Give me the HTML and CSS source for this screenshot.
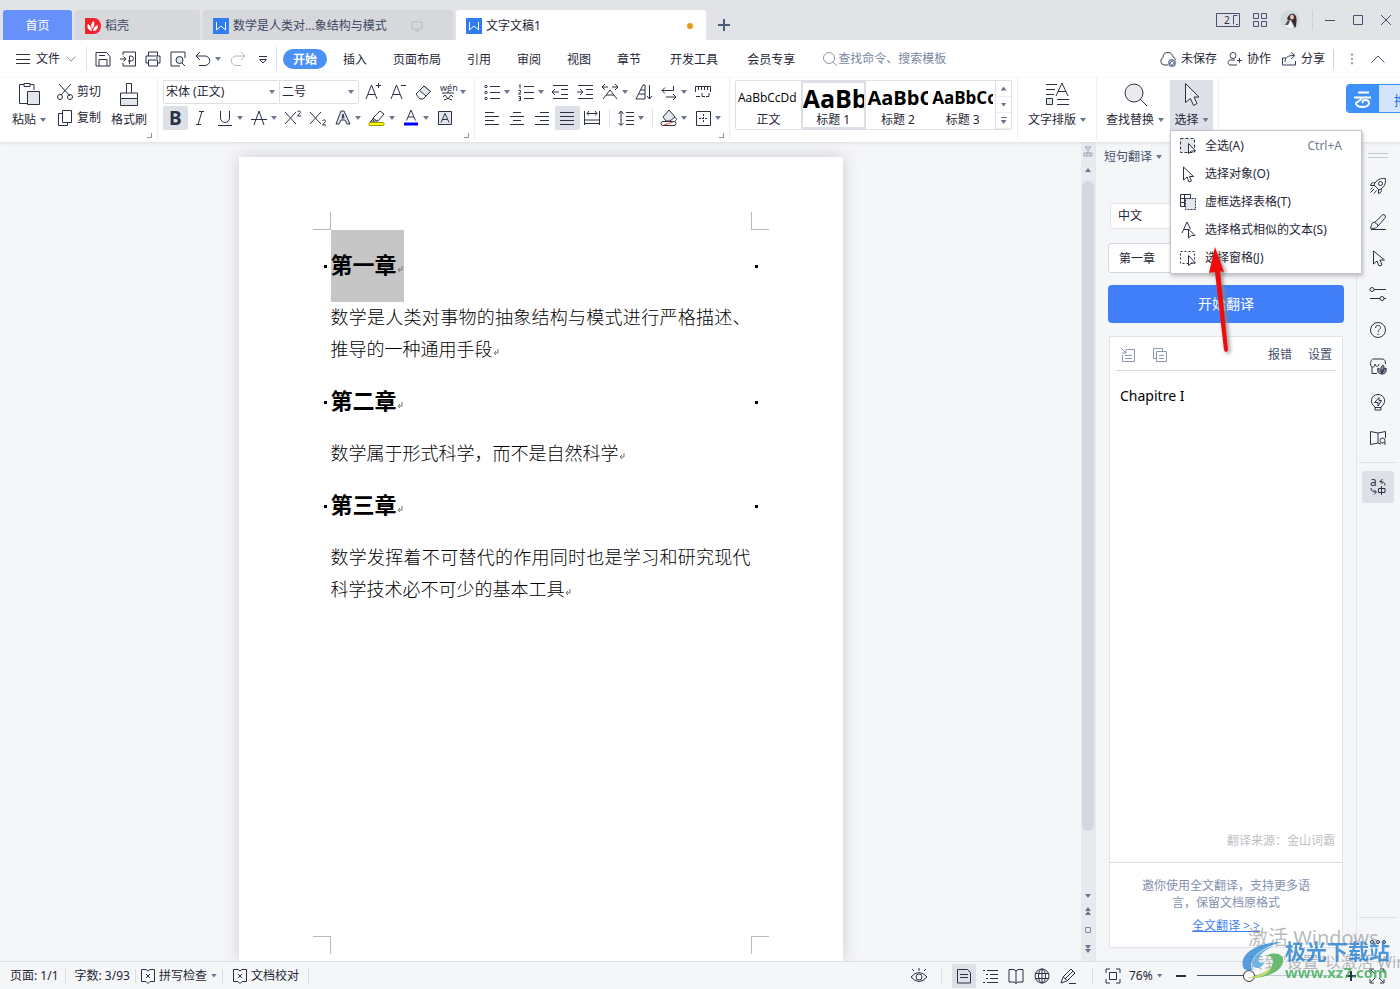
FILE: index.html
```html
<!DOCTYPE html>
<html lang="zh-CN">
<head>
<meta charset="utf-8">
<title>文字文稿1</title>
<link rel="stylesheet" href="styles.css">
</head>
<body>
<header class="titlebar">
  <nav class="tabs">
    <button class="tab tab-home">首页</button>
    <button class="tab tab-docer"><svg class="logo" viewBox="0 0 16 16"><path d="M0 0h9a7 8 0 0 1 0 16H0z" fill="#f5222d"/><path d="M7 13C2 12 2 8 3 6c2 1 3 3 4 7zM7 11C5 7 7 4 9 3c1 3 0 6-2 8zM8 13c0-3 2-5 5-6 0 4-2 6-5 6z" fill="#fff"/></svg>稻壳</button>
    <button class="tab tab-doc"><svg class="logo" viewBox="0 0 16 16"><rect width="16" height="16" fill="#2f7df0"/><path d="M3.500 4v8L8 8l4.500 4V4" fill="none" stroke="#fff"/></svg>数学是人类对...象结构与模式<svg class="screen" viewBox="0 0 12 12"><path d="M1 2h10v7H1zM6 9v2M4 11h4" fill="none" stroke="#b6bccd"/></svg></button>
    <button class="tab tab-active"><svg class="logo" viewBox="0 0 16 16"><rect width="16" height="16" fill="#2f7df0"/><path d="M3.500 4v8L8 8l4.500 4V4" fill="none" stroke="#fff"/></svg>文字文稿1<i class="unsaved"></i></button>
    <button class="newtab" aria-label="新建"><svg viewBox="-6 -6 12 12"><path d="M-6 0H6M0-6V6" stroke="#4d5b7a" stroke-width="2"/></svg></button>
  </nav>
  <div class="window-tools">
    <svg class="w24" viewBox="0 0 24 14"><path d="M.5.500h23v13H.5zM21.500 2.500h-4v9M20 11.500h2" fill="none" stroke="#44516f"/><text x="8" y="11" class="num">2</text></svg>
    <svg class="w16" viewBox="0 0 16 16"><path d="M1.500 1.500h5v5h-5zM9.500 1.500h5v5h-5zM1.500 9.500h5v5h-5zM9.500 9.500h5v5h-5z" fill="none" stroke="#44516f"/></svg>
    <svg class="w20" viewBox="0 0 20 20"><circle cx="10" cy="10" r="10" fill="#cfdadf"/><path d="M7 9c1-4 4-6 7-5 3 2 3 6 2 12l-1 2-3-6z" fill="#3b2c31"/><path d="M5 16c1-3 3-5 6-6l2 8c-3 1-6 0-8-2z" fill="#f2f3f5"/><path d="M5 15l3-5 2 1-2 4z" fill="#5a4a52"/><ellipse cx="12" cy="7" rx="2" ry="2.500" fill="#e9c2ad"/></svg>
    <i class="vline"></i>
    <svg class="w12" viewBox="0 0 12 12"><path d="M1 6.500h10" stroke="#44516f"/></svg>
    <svg class="w12" viewBox="0 0 12 12"><path d="M1.500 1.500h9v9h-9z" fill="none" stroke="#44516f"/></svg>
    <svg class="w12" viewBox="0 0 12 12"><path d="M1 1l10 10M11 1L1 11" stroke="#44516f"/></svg>
  </div>
</header>

<div class="menubar">
  <button class="file"><svg class="w14" viewBox="0 0 14 12"><path d="M0 1.500h14M0 6.500h14M0 10.500h14" stroke="#333"/></svg>文件<svg class="chev" viewBox="0 0 10 6"><path d="M.5.500L5 5 9.500.5" fill="none" stroke="#888f9f"/></svg></button>
  <div class="quick">
    <button aria-label="保存"><svg class="ic" viewBox="-12 -12 24 24"><path d="M-7-6.500H3.500l3.500 4V7H-7zM-4 7V.5H4V7M-4-3.500H2"/></svg></button>
    <button aria-label="输出为PDF"><svg class="ic" viewBox="-12 -12 24 24"><path d="M-5-4v-3H7.500V7H-5V4M-8 0h6M-4.500-2.500L-2 0l-2.500 2.500M1.500 5v-8h1.500a2.300 2.300 0 0 1 0 5H0"/></svg></button>
    <button aria-label="打印"><svg class="ic" viewBox="-12 -12 24 24"><path d="M-4.500-3v-4h9v4M-4.500 4H-7v-7H7v7H4.500M-4.500 1h9v6h-9zM3-1h2"/></svg></button>
    <button aria-label="打印预览"><svg class="ic" viewBox="-12 -12 24 24"><path d="M7-1v-6H-7V7H2"/><circle cx="1.500" cy="1" r="3.500" fill="#e3e6ea"/><path d="M4 4l3 3"/></svg></button>
    <button class="dd" aria-label="撤销"><svg class="ic" viewBox="-12 -12 24 24"><path d="M-3-7l-4 4 4 4M-7-3H2a4.500 4.500 0 0 1 0 9.500h-6"/></svg><i class="caret"></i></button>
    <button class="pale" aria-label="恢复"><svg class="ic" viewBox="-12 -12 24 24"><path d="M3-7l4 4-4 4M7-3H-2a4.500 4.500 0 0 0 0 9.500H3"/></svg></button>
    <button aria-label="自定义"><svg class="ic" viewBox="-12 -12 24 24"><path d="M-4-2.500h8M-3.500.500L0 4 3.500.5z"/></svg></button>
  </div>
  <nav class="menu-tabs">
    <button class="on">开始</button><button>插入</button><button>页面布局</button><button>引用</button><button>审阅</button><button>视图</button><button>章节</button><button>开发工具</button><button>会员专享</button>
  </nav>
  <label class="search"><svg class="w16" viewBox="0 0 16 16"><circle cx="7" cy="7" r="5.500" fill="none" stroke="#8c96ad"/><path d="M11 11l4 4" stroke="#8c96ad"/></svg><input type="text" placeholder="查找命令、搜索模板" aria-label="查找命令"></label>
  <div class="account">
    <button><svg class="w18" viewBox="0 0 18 16"><path d="M9 14H5a4 4 0 0 1-1-7.500C4 3 6 1.500 9 1.500S14 4 14 6c2 1 2.500 2 2.500 3" fill="none" stroke="#333d55"/><circle cx="13" cy="12" r="4" fill="#7e8aa5"/><path d="M11.500 10.500l3 3M14.500 10.500l-3 3" stroke="#fff"/></svg>未保存</button>
    <button><svg class="w16" viewBox="0 0 16 16"><circle cx="6" cy="4.500" r="3" fill="none" stroke="#333d55"/><path d="M8 9H4c-2 0-3 1-3 2.500S2 14 3 14h7M10 9.500h5M12.500 7v5" fill="none" stroke="#333d55"/></svg>协作</button>
    <button><svg class="w16" viewBox="0 0 16 16"><path d="M5 7H1.500v7h13v-4M4 11c0-5 3-6.500 9-6.500M10 1.500l4 3-4 3.500" fill="none" stroke="#333d55"/></svg>分享</button>
    <i class="vline"></i>
    <button aria-label="更多"><svg class="w12" viewBox="0 0 12 14"><path d="M5 1h2v2H5zM5 6h2v2H5zM5 11h2v2H5z" fill="#6c7689"/></svg></button>
    <button class="fold" aria-label="收起"><svg class="w14" viewBox="0 0 14 8"><path d="M.5 7.500L7 1l6.500 6.500" fill="none" stroke="#44516f"/></svg></button>
  </div>
</div>

<section class="ribbon">
  <div class="group g-clip">
    <button class="big paste"><svg class="bigic" viewBox="0 0 28 28"><path d="M9 4.500H4.500v19H12M19 10V4.500h-4M9 3.500h6v3H9z"/><path d="M12.500 11.500h12v13h-12z" fill="#e3e6ea"/></svg><span>粘贴<i class="caret"></i></span></button>
    <div class="stack">
      <button><svg class="w18" viewBox="0 0 18 18"><path d="M3 1l11 12M15 1L5 12"/><circle cx="4" cy="14" r="2.500"/><circle cx="14" cy="14" r="2.500"/></svg>剪切</button>
      <button><svg class="w18" viewBox="0 0 18 18"><path d="M6.500 1.500h9v12h-9zM6 4.500H2.500v12h9V14"/></svg>复制</button>
    </div>
    <button class="big brush"><svg class="bigic" viewBox="0 0 28 28"><path d="M11.500 13V3.500h5V13M5.500 18v-5h17v5"/><path d="M5.500 18.500h17v7h-17z" fill="#e3e6ea"/></svg><span>格式刷</span></button>
    <i class="launcher"></i>
  </div>

  <div class="group g-font">
    <div class="rows">
      <div class="row">
        <span class="combo family"><select aria-label="字体"><option>宋体 (正文)</option></select><i class="caret"></i></span>
        <span class="combo size"><select aria-label="字号"><option>二号</option></select><i class="caret"></i></span>
        <button aria-label="增大字号"><svg class="ic" viewBox="-12 -12 24 24"><path d="M-7 7L-1.500-7 4 7M-5 2.500H2M3-6.500h5M5.500-9v5"/></svg></button>
        <button aria-label="减小字号"><svg class="ic" viewBox="-12 -12 24 24"><path d="M-7 7L-1.500-7 4 7M-5 2.500H2M3-6.500h5"/></svg></button>
        <button aria-label="清除格式"><svg class="ic" viewBox="-12 -12 24 24"><path d="M-7 2L1-6l6.500 5.500L0 7h-3z"/><path d="M-3.500-1.500L3 4l4.500-4.500L1-6z" fill="#e3e6ea"/></svg></button>
        <button class="dd" aria-label="拼音指南"><svg class="ic" viewBox="-12 -12 24 24"><text x="-8" y="-1" class="pinyin">wén</text><path d="M-6 1H6M0-1v2M-3 3l-2 2M3 3l2 2M-4 8C0 7 2 5 3 3M4 8C0 7-2 5-3 3"/></svg><i class="caret"></i></button>
      </div>
      <div class="row">
        <button class="sel" aria-label="加粗"><svg class="ic" viewBox="-12 -12 24 24"><text x="-6" y="7" class="bold">B</text></svg></button>
        <button aria-label="倾斜"><svg class="ic" viewBox="-12 -12 24 24"><path d="M-1-6.500h5M-4 6.500h5M2-6.500l-4 13"/></svg></button>
        <button class="dd" aria-label="下划线"><svg class="ic" viewBox="-12 -12 24 24"><path d="M-4.500-7v7a4.500 4.500 0 0 0 9 0v-7M-7 7.500H7"/></svg><i class="caret"></i></button>
        <button class="dd" aria-label="删除线"><svg class="ic" viewBox="-12 -12 24 24"><path d="M-5 7L0-7 5 7M-8 1.500H8"/></svg><i class="caret"></i></button>
        <button aria-label="上标"><svg class="ic" viewBox="-12 -12 24 24"><path d="M-8-6L3 6M3-6L-8 6M4.500-6c1-2 3.500-1 3 .500L4.500-2H8"/></svg></button>
        <button aria-label="下标"><svg class="ic" viewBox="-12 -12 24 24"><path d="M-8-6L3 6M3-6L-8 6M4.500 3c1-2 3.500-1 3 .500L4.500 7H8"/></svg></button>
        <button class="dd" aria-label="文字效果"><svg class="ic" viewBox="-12 -12 24 24"><path d="M-7 6L-2-7H1L7 6H4L2 2h-4l-2 4zM-1 0h2l-1-4z" fill="#e3e6ea"/></svg><i class="caret"></i></button>
        <button class="dd" aria-label="突出显示"><svg class="ic" viewBox="-12 -12 24 24"><path d="M-4 0L3-7l4 3-6 7h-5zM-4 0l4 3M-4 1l-3 3h4"/><rect x="-8" y="4.500" width="15" height="3" rx="1" fill="#ff0" stroke="#999900"/></svg><i class="caret"></i></button>
        <button class="dd" aria-label="字体颜色"><svg class="ic" viewBox="-12 -12 24 24"><path d="M-4.500 2.500L0-8 4.500 2.500M-3-1H3"/><path d="M-7 6H7" stroke="#00f" stroke-width="3"/></svg><i class="caret"></i></button>
        <button aria-label="字符底纹"><svg class="ic" viewBox="-12 -12 24 24"><path d="M-6.500-6.500h13v13h-13z" fill="#e3e6ea"/><path d="M-4 4.500L0-4.500 4 4.500M-2.500 1.500h5"/></svg></button>
      </div>
    </div>
    <i class="launcher"></i>
  </div>

  <div class="group g-para">
    <div class="rows">
      <div class="row">
        <button class="dd" aria-label="项目符号"><svg class="ic" viewBox="-12 -12 24 24"><path d="M-2-5.500H8M-2 .5H8M-2 6.500H8"/><circle cx="-6" cy="-5.500" r="1.200"/><circle cx="-6" cy=".5" r="1.200"/><circle cx="-6" cy="6.500" r="1.200"/></svg><i class="caret"></i></button>
        <button class="dd" aria-label="编号"><svg class="ic" viewBox="-12 -12 24 24"><path d="M-2-5.500H8M-2 .5H8M-2 6.500H8M-7-6.500l1-1v4M-7.500-1.500h2v1.500l-2 2h2.500M-7.500 4.500h2v4h-2M-7 6.500h1.500"/></svg><i class="caret"></i></button>
        <button aria-label="减少缩进"><svg class="ic" viewBox="-12 -12 24 24"><path d="M-7-6.500H8M1-2.500H8M1 2.500H8M-7 6.500H8M-8 0h7M-5-3l-3 3 3 3"/></svg></button>
        <button aria-label="增加缩进"><svg class="ic" viewBox="-12 -12 24 24"><path d="M-7-6.500H8M1-2.500H8M1 2.500H8M-7 6.500H8M-8 0h6M-5-3l3 3-3 3"/></svg></button>
        <button class="dd" aria-label="中文版式"><svg class="ic" viewBox="-12 -12 24 24"><path d="M-8-5h6M-5-8l-3 3 3 3M8-5H2M5-8l3 3-3 3M-7 7L0-2 7 7M-4 3h8"/></svg><i class="caret"></i></button>
        <button aria-label="排序"><svg class="ic" viewBox="-12 -12 24 24"><path d="M-8 7L-1-7H1V7zM-5 2h6M-3-2h4M5.500-7V7M3 4l2.500 3L8 4"/></svg></button>
        <button class="dd" aria-label="换行"><svg class="ic" viewBox="-12 -12 24 24"><path d="M4.500-6v4.500H-7M-4-4.500l-3 3 3 3M-3 5H7M4 2l3 3-3 3"/></svg><i class="caret"></i></button>
        <button aria-label="制表位"><svg class="ic" viewBox="-12 -12 24 24"><path d="M-7.500 0v-5.500h15V0M-4.500-5v3M-1.500-5v3M1.500-5v3M4.500-5v3M-7 4.500h4M-1 1v3.500h3M6 1v3.500H3"/></svg></button>
      </div>
      <div class="row">
        <button aria-label="左对齐"><svg class="ic" viewBox="-12 -12 24 24"><path d="M-7-5.500h9M-7-1.500H7M-7 2.500h9M-7 6.500H7"/></svg></button>
        <button aria-label="居中"><svg class="ic" viewBox="-12 -12 24 24"><path d="M-4-5.500h8M-7-1.500H7M-4 2.500h8M-7 6.500H7"/></svg></button>
        <button aria-label="右对齐"><svg class="ic" viewBox="-12 -12 24 24"><path d="M-2-5.500h9M-7-1.500H7M-2 2.500h9M-7 6.500H7"/></svg></button>
        <button class="sel" aria-label="两端对齐"><svg class="ic" viewBox="-12 -12 24 24"><path d="M-7-5.500H7M-7-1.500H7M-7 2.500H7M-7 6.500H7"/></svg></button>
        <button aria-label="分散对齐"><svg class="ic" viewBox="-12 -12 24 24"><path d="M-7.500-7V7M7.500-7V7M-5-4.500H5M-3-7l-2 2.500 2 2M3-7l2 2.500-2 2M-7 2H7M-7 5.500H7"/></svg></button>
        <i class="mini"></i>
        <button class="dd" aria-label="行距"><svg class="ic" viewBox="-12 -12 24 24"><path d="M-5-6V7M-7.500-4L-5-7l2.500 3M-7.500 5L-5 7.500-2.500 5M0-5.500h8M0-1.500h8M0 2.500h8M0 6.500h8"/></svg><i class="caret"></i></button>
        <i class="mini"></i>
        <button class="dd" aria-label="底纹颜色"><svg class="ic" viewBox="-12 -12 24 24"><path d="M-6-1L0-8l6 7-5 4h-4z" fill="#e3e6ea"/><path d="M6-1c2 2 2 3 0 4"/><rect x="-8" y="3.500" width="15" height="4" rx="2" fill="#fff"/><path d="M-5 7L4 4" stroke="#e34a4a"/></svg><i class="caret"></i></button>
        <button class="dd" aria-label="边框"><svg class="ic" viewBox="-12 -12 24 24"><path d="M-6.500-6.500h14v14h-14z"/><path d="M-4 .5h9M.5-4v9" stroke-dasharray="2 1"/></svg><i class="caret"></i></button>
      </div>
    </div>
    <i class="launcher"></i>
  </div>

  <div class="group g-style">
    <div class="gallery">
      <button class="style"><b class="s0">AaBbCcDd</b>正文</button>
      <button class="style picked"><b class="s1">AaBb</b>标题 1</button>
      <button class="style"><b class="s2">AaBbC</b>标题 2</button>
      <button class="style"><b class="s3">AaBbCc</b>标题 3</button>
      <div class="spin"><button aria-label="上"><i class="caret up"></i></button><button aria-label="下"><i class="caret"></i></button><button class="expand" aria-label="展开"><i class="caret"></i></button></div>
    </div>
  </div>
  <div class="group g-type">
    <button class="big"><svg class="bigic" viewBox="0 0 28 28"><path d="M3 4.500h11M3 9.500h9M3 14.500h8M13 16l6-13 6 13M15 11.500h8M14 19.500h12M14 24.500h12"/><path d="M3.500 18.500h6v6h-6z" fill="#e3e6ea"/></svg><span>文字排版<i class="caret"></i></span></button>
  </div>
  <div class="group g-find">
    <button class="big find"><svg class="bigic" viewBox="0 0 28 28"><circle cx="13" cy="13" r="9" fill="#e9ebee"/><path d="M19 19l7 7"/></svg><span>查找替换<i class="caret"></i></span></button>
    <div class="pick">
      <button class="big open"><svg class="bigic" viewBox="0 0 28 28"><path d="M7.500 3.500v19l5-4 3 7 3.500-2-3-6.500H21z" fill="#eceef1"/></svg><span>选择<i class="caret"></i></span></button>
      <ul class="menu">
        <li><button><svg class="w18" viewBox="0 0 18 18"><path d="M1.500 1.500h14v14h-14z" stroke-dasharray="3 2" fill="#e3e6ea"/><path d="M9.500 6.500v10l3-2.500h4z" fill="#fff"/></svg>全选(A)<kbd>Ctrl+A</kbd></button></li>
        <li><button><svg class="w18" viewBox="0 0 18 18"><path d="M4.500 2v13l3.500-3 2 5 2.500-1-2-4.500h4z"/></svg>选择对象(O)</button></li>
        <li><button><svg class="w18" viewBox="0 0 18 18"><path d="M1.500 1.500h10v12h-10zM5.500 1.500v12M1.500 5.500h10M1.500 9.500h5"/><path d="M6.500 5.500h10v11h-10z" stroke-dasharray="2 1" fill="#e3e6ea"/></svg>虚框选择表格(T)</button></li>
        <li><button><svg class="w18" viewBox="0 0 18 18"><path d="M3 12L8 1l3.500 7M5 8.500h5M9.500 8v9l3-2.500H16z"/></svg>选择格式相似的文本(S)</button></li>
        <li><button><svg class="w18" viewBox="0 0 18 18"><path d="M1.500 2.500h14v12h-14z" stroke-dasharray="2 2"/><path d="M9.500 6.500v10l3-2.500h4z" fill="#fff"/></svg>选择窗格(J)</button></li>
      </ul>
      <svg class="pointer" viewBox="0 0 32 116"><path d="M8 3l9 25-4-1 8 79q-2 4-4 0L8 28l-6 1z" fill="#f00b0b"/></svg>
    </div>
  </div>
  <div class="cloud"><span class="cloud-logo"><svg class="w20" viewBox="0 0 20 20"><path d="M5 3.500h11M1 8.500h17M9 9c-2 3-5 4-6 5 0 3 3 4 7 4s6-2 6-4-2-3-4-3-3 2-2 3" fill="none" stroke="#fff" stroke-width="2"/></svg></span><span class="cloud-text">拖</span></div>
</section>

<main class="work">
  <section class="canvas">
    <article class="page">
      <div class="corners top"><i class="c tl"></i><i class="c tr"></i></div>
      <div class="text">
        <h1><span class="hl">第一章<svg class="ret" viewBox="0 0 6 8"><path d="M5 1v4H1M3 3L1 5l2 2" fill="none" stroke="#777"/></svg></span></h1>
        <p>数学是人类对事物的抽象结构与模式进行严格描述、推导的一种通用手段<svg class="ret" viewBox="0 0 6 8"><path d="M5 1v4H1M3 3L1 5l2 2" fill="none" stroke="#777"/></svg></p>
        <h1><span>第二章<svg class="ret" viewBox="0 0 6 8"><path d="M5 1v4H1M3 3L1 5l2 2" fill="none" stroke="#777"/></svg></span></h1>
        <p>数学属于形式科学，而不是自然科学<svg class="ret" viewBox="0 0 6 8"><path d="M5 1v4H1M3 3L1 5l2 2" fill="none" stroke="#777"/></svg></p>
        <h1><span>第三章<svg class="ret" viewBox="0 0 6 8"><path d="M5 1v4H1M3 3L1 5l2 2" fill="none" stroke="#777"/></svg></span></h1>
        <p>数学发挥着不可替代的作用同时也是学习和研究现代科学技术必不可少的基本工具<svg class="ret" viewBox="0 0 6 8"><path d="M5 1v4H1M3 3L1 5l2 2" fill="none" stroke="#777"/></svg></p>
      </div>
      <div class="corners bottom"><i class="c bl"></i><i class="c br"></i></div>
    </article>
  </section>
  <div class="scroll">
    <svg class="w12" viewBox="0 0 12 12"><path d="M3 1h6L6 4zM6 4v3M2 7h8v3H2zM5 7v3M8 7v3" fill="none" stroke="#9aa3b8"/></svg>
    <i class="caret up"></i>
    <div class="thumb"></div>
    <i class="caret"></i>
    <span class="double"><i class="caret up"></i><i class="caret up"></i></span>
    <i class="dot"></i>
    <span class="double"><i class="caret"></i><i class="caret"></i></span>
  </div>

  <aside class="panel">
    <button class="panel-title">短句翻译<i class="caret"></i></button>
    <select class="lang" aria-label="语言"><option>中文</option></select>
    <input class="source" type="text" value="第一章" aria-label="原文">
    <button class="go">开始翻译</button>
    <div class="card">
      <div class="card-bar">
        <svg class="w16" viewBox="0 0 16 16"><path d="M7 2.500h7.500v12h-12V8M1 1l5 5M6 2v4H2M5 8.500h7M5 11.500h7" fill="none" stroke="#8c96ad"/></svg>
        <svg class="w16" viewBox="0 0 16 16"><path d="M4 11.500H1.500v-10h9V4M4.500 4.500h10v10h-10zM7 8.500h5M7 11.500h5" fill="none" stroke="#8c96ad"/></svg>
        <button class="report">报错</button><button>设置</button>
      </div>
      <p class="result">Chapitre I</p>
      <p class="credit">翻译来源：金山词霸</p>
      <div class="promo"><p>邀你使用全文翻译，支持更多语言，保留文档原格式</p><a href="#">全文翻译 &gt; &gt;</a></div>
    </div>
  </aside>

  <nav class="rail">
    <i class="grip"></i>
    <button aria-label="快捷"><svg class="ic" viewBox="-12 -12 24 24"><path d="M7.500-7.500C2-8-2-6-4-1l5 5C6 2 8-2 7.500-7.500zM-3-3c-2-1-4 0-4.500 2.500H-4M3 3c1 2 0 4-2.500 4.500V4M-4 3l-3.500 3.500M-1.500 4.500L-4 7.500M-5.500 1.500l-2 2"/><circle cx="2.500" cy="-2.500" r="2"/></svg></button>
    <button aria-label="样式"><svg class="ic" viewBox="-12 -12 24 24"><path d="M-7 7.500H8M-4 1L5-7.500q3 0 2.500 3L0 4M-4 0c-3 1-2 4-4 6 4 1 8 0 8-3z"/></svg></button>
    <button aria-label="选择"><svg class="ic" viewBox="-12 -12 24 24"><path d="M-4.500-7V6L-1 3l2 5 3-1-2-5h4.500z"/></svg></button>
    <button aria-label="设置"><svg class="ic" viewBox="-12 -12 24 24"><path d="M-4-4.500H8M-8 4.500H2M6 4.500h2"/><circle cx="-6" cy="-4.500" r="2"/><circle cx="4" cy="4.500" r="2"/></svg></button>
    <button aria-label="帮助"><svg class="ic" viewBox="-12 -12 24 24"><circle r="7.500"/><path d="M-2.500-2c0-3.500 5-3.500 5-.5C2.500-.5 0-.5 0 2M0 3.500V5"/></svg></button>
    <button aria-label="商城"><svg class="ic" viewBox="-12 -12 24 24"><path d="M-6 1v6.500h5M-7.500-1c0-4 1-6 3-6h9c2 0 3 2 3 5M-7.500-2c0 4 4.500 4 4.500 0 0 3 4 3 4 0"/><path d="M4 8c-4 0-5-3-4-6 2 1 3 2 4 6zM4 7C2 4 3 0 5-1c2 2 1 6-1 8zM4 8c0-3 1-5 4-6 1 4-1 6-4 6z" fill="#8b929f"/></svg></button>
    <button aria-label="灵感"><svg class="ic" viewBox="-12 -12 24 24"><path d="M-3 5C-9 1-7-7.500 0-7.500S9 1 3 5v3h-6zM-3 5.500h6M1-4.500L-3.500.5H0V4L3.500-1.500H1z"/></svg></button>
    <button aria-label="查阅"><svg class="ic" viewBox="-12 -12 24 24"><path d="M0 5l-7.500 1.500v-13L0-5l7.500-1.500V0M0-5V5l3 1"/><circle cx="4.500" cy="2.500" r="2.500"/><path d="M7 4v3"/></svg></button>
    <i class="rule"></i>
    <button class="sel" aria-label="翻译"><svg class="ic" viewBox="-12 -12 24 24"><text x="-8" y="-1" class="alpha">a</text><path d="M2-5.500c3 0 5 1 5 4M4.500-8L2-5.500 4.500-3M-7 1c0 3 2 4 5 4M-4 2.500L-1.500 5-4 7.500M.5 1.500h6.500v4H.5zM3.500-1v9"/></svg></button>
    <i class="rule low"></i>
    <button class="more" aria-label="更多"><svg class="ic" viewBox="-12 -12 24 24"><circle cx="-6" r="1.500"/><circle r="1.500"/><circle cx="6" r="1.500"/></svg></button>
  </nav>
</main>

<footer class="status">
  <span class="cell">页面: 1/1</span>
  <span class="cell">字数: 3/93</span>
  <button class="cell spell"><svg class="w16" viewBox="0 0 16 16"><path d="M6 1.500H1.500v12H6l2 2 2-2h4.500v-12H10L8 3 6 1.500M6 6l4 4M10 6l-4 4"/></svg>拼写检查<i class="caret"></i></button>
  <button class="cell"><svg class="w16" viewBox="0 0 16 16"><path d="M6 1.500H1.500v12H6l2 2 2-2h4.500v-12H10L8 3 6 1.500M6 6l4 4M10 6l-4 4"/></svg>文档校对</button>
  <div class="views">
    <button aria-label="护眼"><svg class="ic" viewBox="-12 -12 24 24"><path d="M-8 1q8-9 16 0-8 9-16 0zM-5-5l-2-2M0-5v-3M5-5l2-2"/><circle cy="1" r="3"/></svg></button>
    <i class="bar"></i>
    <button class="sel" aria-label="页面视图"><svg class="ic" viewBox="-12 -12 24 24"><path d="M-6.500-6.500h10l3 3V7h-13zM-4-1.500h8M-4 1.500h8"/></svg></button>
    <button aria-label="大纲"><svg class="ic" viewBox="-12 -12 24 24"><path d="M-7-5.500h2M-3-5.500H8M-4-1.500h2M0-1.500h8M-4 2.500h2M0 2.500h8M-7 6.500h2M-3 6.500H8"/></svg></button>
    <button aria-label="阅读"><svg class="ic" viewBox="-12 -12 24 24"><path d="M0-5l-2-1.500h-5V6h5l2 1.500L2 6h5v-12.500H2L0-5V7"/></svg></button>
    <button aria-label="网页"><svg class="ic" viewBox="-12 -12 24 24"><circle r="7"/><ellipse rx="3.500" ry="7"/><path d="M-7-2.500H7M-7 2.500H7M0-7V7"/></svg></button>
    <button aria-label="写作"><svg class="ic" viewBox="-12 -12 24 24"><path d="M-7 7l2-6 8-8 4 4-8 8-6 2zM-4.500 1l3.500 3.500M-3 3L5-5M1 7.500h7"/></svg></button>
    <i class="bar last"></i>
  </div>
  <div class="zoom">
    <svg class="ic" viewBox="-12 -12 24 24"><path d="M-7-3v-4h4M3-7h4v4M7 3v4H3M-3 7h-4V3M-3.500-3.500h7v7h-7z"/></svg>
    <button class="percent">76%<i class="caret"></i></button>
    <button aria-label="缩小"><svg class="w12" viewBox="0 0 12 12"><path d="M1 6h10" stroke-width="2"/></svg></button>
    <input type="range" min="0" max="100" value="35" aria-label="缩放">
    <button aria-label="放大"><svg class="w12" viewBox="0 0 12 12"><path d="M1 6h10M6 1v10" stroke-width="2"/></svg></button>
    <svg class="ic full" viewBox="-12 -12 24 24"><path d="M-7-3v-4h4M3-7h4v4M7 3v4H3M-3 7h-4V3M-6-6l4 4M6-6L2-2M6 6L2 2M-6 6l4-4"/></svg>
  </div>
</footer>

<div class="activate"><p class="act-head">激活 Windows</p><p>转到"设置"以激活 Windows</p></div>
<div class="site">
  <svg class="swirl" viewBox="0 0 44 38"><path d="M42 1C18 1-2 12 2 26c1 3 5 4 9 3C6 18 20 6 42 1z" fill="#3a8fd8"/><path d="M33 5C20 8 9 17 12 25c3 4 9 2 12-4-5 2-8 0-6-4 2-5 8-9 15-12z" fill="#5aaee4"/><path d="M26 14c8-3 15-1 16 4 2 10-14 20-36 19 15-3 25-9 26-16 0-4-2-6-6-7z" fill="#58b45c"/><path d="M31 24C26 33 15 35 6 37c14 1 24-5 25-13z" fill="#d8d94d"/></svg>
  <div><p class="site-name">极光下载站</p><p class="site-url">www.xz7.com</p></div>
</div>
</body>
</html>
```
FILE: styles.css
```css
* { box-sizing: border-box; }
html, body { height: 100%; }
body {
  margin: 0;
  display: flex;
  flex-direction: column;
  position: relative;
  overflow: hidden;
  font: 12px/16px "Noto Sans", "Noto Sans CJK SC", sans-serif;
  color: #1f2636;
  background: #f5f6f8;
}
button, input, select { font: inherit; color: inherit; margin: 0; padding: 0; border: 0; background: none; }
button { white-space: nowrap; cursor: default; }
select { appearance: none; }
p, h1, ul { margin: 0; padding: 0; }
ul { list-style: none; }
svg { display: block; flex: none; }
.ribbon svg, .quick svg, .rail svg, .status svg { fill: none; stroke: #2b3145; }
svg text { stroke: none; fill: #2b3145; }
.num { font-size: 10px; }
.pinyin { font-size: 9px; }
.bold { font-size: 19px; font-weight: 700; }
.alpha { font-size: 12px; }
.ic { width: 24px; height: 24px; }
.w12 { width: 12px; height: 12px; }
.w14 { width: 14px; height: 12px; }
.w16 { width: 16px; height: 16px; }
.w18 { width: 18px; height: 18px; }
.w20 { width: 20px; height: 20px; }
.w24 { width: 24px; height: 14px; }
.caret { display: inline-block; flex: none; width: 6px; height: 4px; background: #6b7690; clip-path: polygon(0 0, 100% 0, 50% 100%); }
.caret.up { clip-path: polygon(50% 0, 100% 100%, 0 100%); }
.vline { width: 1px; height: 20px; background: #d0d3da; }

/* title bar */
.titlebar { flex: none; display: flex; justify-content: space-between; height: 40px; background: #e2e3e7; }
.tabs { display: flex; gap: 3px; padding: 10px 0 0 3px; }
.tab { display: flex; align-items: center; height: 30px; gap: 4px; padding: 2px 10px 0; background: #d7d8dc; border-radius: 3px 3px 0 0; color: #3d4763; }
.tab-home { width: 69px; justify-content: center; color: #fff; background: #6691fb; }
.tab-docer { width: 125px; }
.tab-doc, .tab-active { width: 250px; }
.tab-active { background: #fff; color: #1f2636; }
.logo { width: 16px; height: 16px; }
.screen { width: 12px; height: 12px; margin-left: 20px; }
.unsaved { width: 6px; height: 6px; margin-left: auto; margin-right: 3px; border-radius: 50%; background: #e69a0c; }
.newtab { padding: 0 9px; }
.newtab svg { width: 12px; height: 12px; }
.window-tools { display: flex; align-items: center; padding-right: 8px; gap: 12px; }
.window-tools .vline { margin-right: -1px; }
.window-tools .w12 + .w12 { margin-left: 4px; }

/* menu bar */
.menubar { flex: none; display: flex; align-items: center; height: 38px; background: #fff; }
.file { display: flex; align-items: center; gap: 6px; height: 24px; padding-left: 16px; width: 87px; border-right: 1px solid #dcdfe5; }
.chev { width: 10px; height: 6px; }
.quick { display: flex; align-items: center; width: 190px; padding-left: 4px; border-right: 1px solid #dcdfe5; }
.quick button { display: flex; align-items: center; width: 25px; }
.quick .dd { width: 35px; }
.quick .pale svg { stroke: #b4b8c2; }
.menu-tabs { display: flex; gap: 6px; padding-left: 6px; }
.menu-tabs button { height: 20px; padding: 1px 10px 0; }
.menu-tabs button:nth-last-child(-n+2) { margin-left: 3px; }
.menu-tabs .on { color: #fff; font-weight: 700; background: #4a90f5; border-radius: 10px; }
.search { display: flex; align-items: center; padding-left: 17px; }
.search input { width: 150px; outline: none; }
.search input::placeholder { color: #7b87a3; opacity: 1; }
.account { display: flex; align-items: center; margin-left: auto; gap: 10px; padding-right: 15px; }
.account button { display: flex; align-items: center; gap: 4px; }
.account .vline { margin: 0 2px 0 -2px; }
.account .fold { margin-left: 3px; }

/* ribbon */
.ribbon { flex: none; position: relative; z-index: 2; display: flex; height: 64px; background: #fff; box-shadow: 0 1px 3px #d8dade; }
.group { flex: none; position: relative; display: flex; height: 62px; padding-top: 2px; border-right: 1px solid #eceef1; }
.launcher { position: absolute; right: 5px; bottom: 2px; width: 5px; height: 5px; border: solid #8c94a6; border-width: 0 1px 1px 0; }
.big { display: flex; flex-direction: column; align-items: center; height: 50px; }
.big span { display: flex; align-items: center; gap: 4px; line-height: 20px; }
.bigic { width: 28px; height: 28px; margin-bottom: 2px; }
.g-clip { width: 158px; padding-left: 10px; }
.paste { width: 38px; }
.stack { display: flex; flex-direction: column; gap: 2px; margin-left: 8px; }
.stack button { display: flex; align-items: center; gap: 3px; height: 24px; }
.brush { margin-left: 10px; }
.g-font { width: 317px; padding-left: 5px; }
.g-para { width: 255px; padding-left: 5px; }
.rows { display: flex; flex-direction: column; gap: 2px; }
.row { display: flex; align-items: center; height: 24px; }
.row > button { display: flex; align-items: center; flex: none; width: 25px; height: 24px; }
.row > .dd { width: 34px; }
.sel { background: #dde1e7; border-radius: 2px; }
.combo { display: flex; align-items: center; flex: none; height: 24px; padding: 0 4px 0 2px; border: 1px solid #dcdfe5; }
.combo select { flex: 1; min-width: 0; }
.family { width: 116px; border-right: 0; border-radius: 2px 0 0 2px; }
.size { width: 80px; margin-right: 2px; border-radius: 0 2px 2px 0; }
.mini { width: 1px; height: 18px; margin: 0 4px; background: #dcdfe5; }
.g-style { width: 288px; padding-left: 5px; }
.gallery { display: flex; width: 277px; height: 50px; border: 1px solid #dcdfe5; border-radius: 2px; }
.style { display: flex; flex-direction: column; align-items: center; width: 65px; height: 48px; overflow: hidden; color: #1f2636; }
.style b { display: flex; align-items: center; width: 61px; height: 31px; padding-top: 2px; overflow: hidden; color: #000; font-family: "Open Sans", sans-serif; }
.picked { box-shadow: inset 0 0 0 2px #dcdfe5; }
.style .s0 { font-weight: 400; font-size: 12px; }
.s1 { font-size: 25px; }
.s2 { font-size: 20px; }
.s3 { font-size: 17px; }
.spin { display: flex; flex-direction: column; width: 16px; border-left: 1px solid #dcdfe5; }
.spin button { display: flex; flex: 1; flex-direction: column; gap: 2px; align-items: center; justify-content: center; border-bottom: 1px solid #eceef1; }
.expand::before { content: ""; width: 6px; height: 1px; background: #6b7690; }
.g-type { width: 79px; justify-content: center; }
.g-find { width: 122px; padding-left: 3px; }
.find { width: 70px; }
.pick { position: relative; }
.open { width: 43px; background: #dde1e7; }
.menu { position: absolute; left: 0; top: 50px; width: 192px; padding: 1px 0; background: #fff; border: 1px solid #c2c5cc; box-shadow: 1px 2px 4px #bbb; }
.menu button { display: flex; align-items: center; width: 100%; height: 28px; gap: 8px; padding: 0 19px 0 8px; }
.menu kbd { margin-left: auto; font: inherit; color: #737b8c; }
.pointer { position: absolute; left: 37px; top: 162px; width: 32px; height: 120px; filter: drop-shadow(2px 2px 2px #888); }
.ribbon .pointer { stroke: none; }
.cloud { display: flex; width: 54px; height: 29px; margin: 6px 0 0 auto; border: 1px solid #3b8df7; border-right: 0; border-radius: 4px 0 0 4px; overflow: hidden; background: #d2e5fd; color: #1f6fea; }
.cloud-logo { display: flex; align-items: center; justify-content: center; width: 32px; flex: none; background: #3e90fa; }
.cloud-text { padding: 7px 0 0 15px; font-size: 13px; white-space: nowrap; }

/* workspace */
.work { flex: 1; display: flex; min-height: 0; }
.canvas { flex: 1; display: flex; justify-content: center; padding-top: 15px; overflow: hidden; }
.page { display: flex; flex-direction: column; width: 604px; padding: 55px 92px 7px; background: #fff; box-shadow: 0 0 16px #c9ccd1; }
.corners { display: flex; justify-content: space-between; margin: 0 -18px; }
.bottom { margin-top: auto; }
.c { width: 18px; height: 18px; border: 0 solid #b9b9b9; }
.tl { border-width: 0 1px 1px 0; }
.tr { border-width: 0 0 1px 1px; }
.bl { border-width: 1px 1px 0 0; }
.br { border-width: 1px 0 0 1px; }
.text { color: #000; font-family: "Liberation Serif", "Noto Sans CJK SC", serif; }
.text h1 { display: flex; align-items: center; justify-content: space-between; height: 72px; margin: 0 -7px; font-size: 22px; font-weight: 700; line-height: 72px; }
.text h1::before, .text h1::after { content: ""; width: 3px; height: 3px; background: #000; }
.text h1 span { height: 72px; margin-left: 4px; margin-right: auto; }
.hl { width: 73px; background: #c6c6c6; }
.text p { font-size: 18px; line-height: 32px; text-align: justify; font-weight: 300; }
.ret { display: inline-block; width: 6px; height: 8px; }
.scroll { display: flex; flex-direction: column; align-items: center; width: 14px; padding: 4px 0 8px; background: #e9eaf0; gap: 12px; }
.scroll > .caret { margin: -3px 0; }
.scroll > .w12 + .caret { margin-top: -2px; }
.thumb { flex: none; width: 12px; height: 650px; margin-bottom: auto; border-radius: 6px; background: #d4d7df; }
.double { display: flex; flex-direction: column; }
.dot { width: 6px; height: 6px; border: 1px solid #7e89a3; border-radius: 1px; }
.panel { display: flex; flex-direction: column; width: 261px; padding: 0 12px 13px; border-left: 1px solid #e6e8ed; }
.panel-title { display: flex; align-items: center; gap: 4px; height: 30px; margin: 0 0 31px -4px; color: #44516f; }
.lang { height: 26px; margin: 0 0 14px 2px; padding-left: 7px; background: #fff; border: 1px solid #e0e3e9; border-radius: 3px; }
.source { height: 30px; margin-bottom: 12px; padding-left: 10px; background: #fff; border: 1px solid #d4d7df; border-radius: 3px; }
.go { height: 38px; margin-bottom: 13px; font-size: 14px; color: #fff; background: #417ff9; border-radius: 4px; }
.card { flex: 1; display: flex; flex-direction: column; margin: 0 1px; background: #fff; border: 1px solid #e0e3e9; }
.card-bar { display: flex; align-items: center; height: 34px; gap: 16px; margin: 0 6px; padding: 2px 4px 0; border-bottom: 1px solid #d4d7df; color: #44516f; }
.report { margin-left: auto; }
.result { padding: 15px 10px; color: #000; font-size: 14px; line-height: 20px; }
.credit { margin-top: auto; padding: 0 7px 13px; text-align: right; color: #bdbfc4; }
.promo { height: 85px; padding: 14px 28px 0; border-top: 1px solid #d9dce2; text-align: center; color: #8390ad; line-height: 17px; }
.promo a { display: inline-block; margin-top: 6px; color: #417ff9; }
.rail { display: flex; flex-direction: column; align-items: center; width: 44px; padding-right: 2px; gap: 12px; border-left: 1px solid #e0e3e9; }
.rail button { display: flex; width: 32px; height: 24px; justify-content: center; align-items: center; }
.rail .sel { flex: none; height: 32px; margin-top: -4px; }
.grip { width: 20px; height: 5px; margin: 11px 0 4px; border: solid #c4c8d1; border-width: 1px 0; }
.rule { width: 38px; height: 1px; background: #dcdfe5; }
.low { margin-top: auto; }
.more { margin-bottom: 7px; }

/* status bar */
.status { flex: none; display: flex; align-items: center; height: 28px; border-top: 1px solid #dcdfe5; background: #f5f6f8; }
.cell { display: flex; align-items: center; gap: 3px; height: 14px; padding: 0 9px; border-right: 1px solid #d9dce2; }
.cell:first-child { padding: 0 6px 0 10px; }
.cell:nth-child(2) { padding-right: 5px; }
.cell.spell { padding: 0 5px 0 4px; }
.spell .caret { margin-left: 1px; }
.views { display: flex; align-items: center; gap: 2px; margin-left: auto; }
.bar { width: 1px; height: 14px; margin: 0 8px; background: #d9dce2; }
.last { margin-left: 10px; }
.zoom { display: flex; align-items: center; gap: 4px; padding-right: 11px; }
.percent { display: flex; align-items: center; gap: 4px; width: 42px; }
.zoom input { width: 144px; height: 14px; margin-left: 6px; appearance: none; background: linear-gradient(#44516f, #44516f) 0 50% / 51px 1px no-repeat, linear-gradient(#c4c8d1, #c4c8d1) 0 50% / 100% 1px no-repeat; }
.zoom input::-webkit-slider-thumb { appearance: none; width: 12px; height: 12px; border: 1px solid #333; border-radius: 50%; background: #fff; }
.full { margin-left: 4px; }

/* overlays */
.activate { position: absolute; z-index: 3; left: 1248px; bottom: 15px; color: #8d8f93a0; font-size: 16px; line-height: 24px; white-space: nowrap; }
.act-head { font-size: 20px; }
.site { position: absolute; z-index: 4; right: 10px; bottom: 8px; display: flex; align-items: center; opacity: .85; }
.swirl { width: 44px; height: 38px; }
.site-name { color: #2f86d4; font-size: 21px; line-height: 24px; font-weight: 700; }
.site-url { color: #48b061; font-size: 15px; line-height: 18px; font-weight: 700; }
```
